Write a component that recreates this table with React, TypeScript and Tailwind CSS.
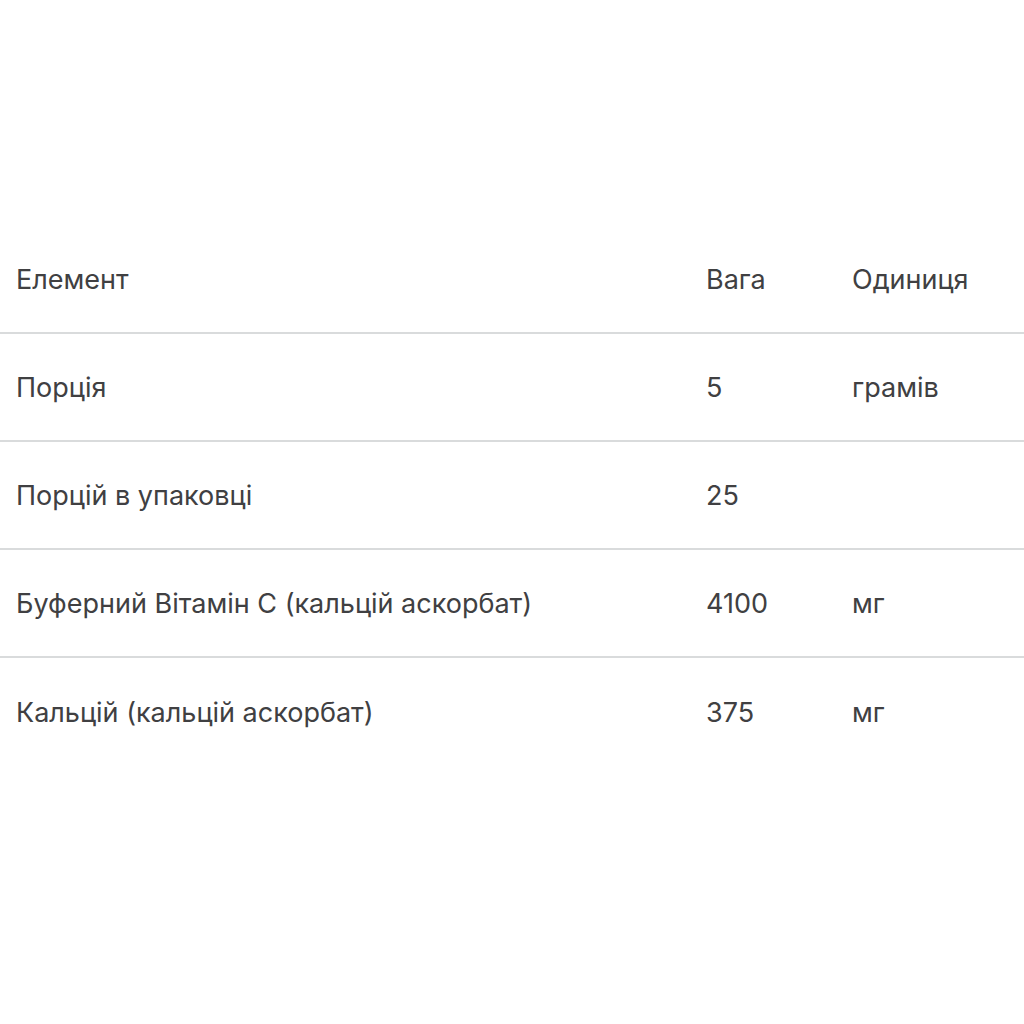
import React from "react";

const rows: [string, string, string][] = [
  ["Порція", "5", "грамів"],
  ["Порцій в упаковці", "25", ""],
  ["Буферний Вітамін С (кальцій аскорбат)", "4100", "мг"],
  ["Кальцій (кальцій аскорбат)", "375", "мг"],
];

function Row({ cells, border }: { cells: [string, string, string]; border: boolean }) {
  return (
    <div
      className={`grid grid-cols-[690px_146px_1fr] h-[108px] items-center ${
        border ? "border-b-2 border-[#d9dbdc]" : ""
      }`}
    >
      {cells.map((c, i) => (
        <div key={i} className="pl-4 text-[27px] leading-none text-[#404042]">
          {c}
        </div>
      ))}
    </div>
  );
}

export default function App() {
  return (
    <div
      className="w-[1024px] h-[1024px] bg-white pt-[226px]"
      style={{ fontFamily: "Inter, 'Noto Sans', sans-serif" }}
    >
      <Row cells={["Елемент", "Вага", "Одиниця"]} border />
      {rows.map((r, i) => (
        <Row key={i} cells={r} border={i < rows.length - 1} />
      ))}
    </div>
  );
}
